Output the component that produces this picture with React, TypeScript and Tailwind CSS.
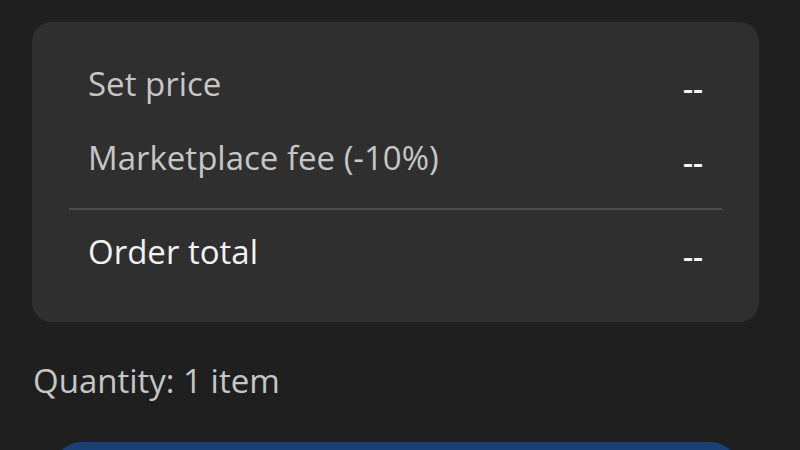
const rows = [
  { label: 'Set price', value: '--' },
  { label: 'Marketplace fee (-10%)', value: '--' },
]

function SummaryRow({ label, value, strong }: { label: string; value: string; strong?: boolean }) {
  return (
    <div className="flex justify-between items-start">
      <span className={strong ? 'text-[#f2f2f2]' : 'text-[#c6c6c6]'}>{label}</span>
      <span className="pt-[4px] text-[#f5f5f5] font-semibold text-[31px]">{value}</span>
    </div>
  )
}

export default function App() {
  return (
    <div
      className="w-[800px] h-[450px] overflow-hidden bg-[#1f1f1f] pt-[22px] text-[33px] leading-[40px]"
      style={{ fontFamily: '"Open Sans", "Noto Sans", sans-serif' }}
    >
      {/* Summary card */}
      <div className="ml-[32px] w-[727px] rounded-[20px] bg-[#2f2f2f] pt-[42px] pb-[46px]">
        <div className="px-[56px] flex flex-col gap-[30px]">
          {rows.map((r) => (
            <SummaryRow key={r.label} label={r.label} value={r.value} />
          ))}
        </div>
        <div className="mx-[37px] mt-[26px] mb-[22px] h-[2px] bg-[#4d4d4d]" />
        <div className="px-[56px]">
          <SummaryRow label="Order total" value="--" strong />
        </div>
      </div>

      {/* Quantity */}
      <p className="ml-[33px] mt-[39px] text-[#c6c6c6]">Quantity: 1 item</p>

      {/* Submit button (cut off) */}
      <div className="ml-[52px] mt-[41px] w-[688px] h-[60px] rounded-full bg-[#1a3f74]" />
    </div>
  )
}
